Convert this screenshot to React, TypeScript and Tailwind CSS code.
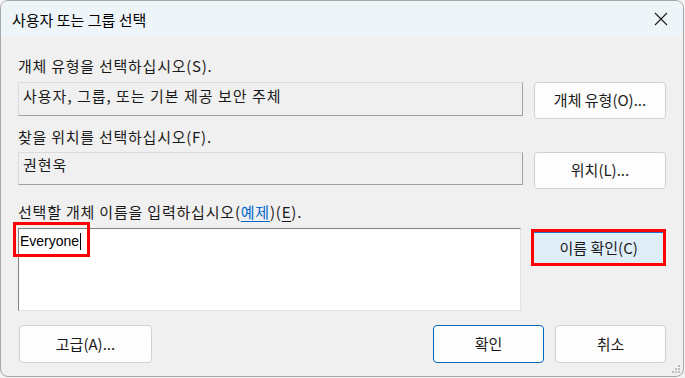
import React from "react";

const font = { fontFamily: '"Noto Sans CJK KR", "Noto Sans", sans-serif' };

function Btn({ children, className = "" }: { children: React.ReactNode; className?: string }) {
  return (
    <div
      className={
        "flex items-center justify-center rounded-[4px] border bg-[#fdfdfd] text-[15px] text-[#1a1a1a] " +
        className
      }
    >
      {children}
    </div>
  );
}

export default function App() {
  return (
    <div className="h-[378px] w-[685px] bg-[#f3f3f3]" style={font}>
      <div className="relative flex h-[377px] w-[684px] flex-col overflow-hidden rounded-[8px] border border-[#a8a8a8] bg-[#f0f0f0]">
        {/* title bar */}
        <div className="flex h-[36px] shrink-0 items-center justify-between bg-[#eef5f9] pl-[11px] pr-[14px]">
          <span className="text-[15px] leading-none text-black">사용자 또는 그룹 선택</span>
          <svg width="14" height="14" viewBox="0 0 14 14" className="mr-[1px]">
            <path d="M1 1 L13 13 M13 1 L1 13" stroke="#1a1a1a" strokeWidth="1.1" />
          </svg>
        </div>

        <div className="flex flex-col px-[17px] text-[15px] text-[#1a1a1a]">
          {/* section 1 */}
          <div className="mt-[19px] h-[20px] leading-[20px] tracking-[0.75px]">개체 유형을 선택하십시오(S).</div>
          <div className="mt-[6px] flex gap-[11px]">
            <div className="h-[34px] w-[505px] border border-[#dcdcdc] border-b-[#a0a0a0] border-r-[#a0a0a0] px-[4px] pt-[3px] leading-[20px] tracking-[1px]">
              사용자, 그룹, 또는 기본 제공 보안 주체
            </div>
            <Btn className="h-[37px] w-[132px] border-[#d0d0d0]">개체 유형(O)...</Btn>
          </div>

          {/* section 2 */}
          <div className="mt-[8px] h-[20px] leading-[20px] tracking-[0.75px]">찾을 위치를 선택하십시오(F).</div>
          <div className="mt-[5px] flex gap-[11px]">
            <div className="h-[33px] w-[505px] border border-[#dcdcdc] border-b-[#a0a0a0] border-r-[#a0a0a0] px-[4px] pt-[2px] leading-[20px] tracking-[1px]">
              권현욱
            </div>
            <Btn className="h-[37px] w-[132px] border-[#d0d0d0]">위치(L)...</Btn>
          </div>

          {/* section 3 */}
          <div className="mt-[13px] h-[20px] leading-[20px] tracking-[0.8px]">
            선택할 개체 이름을 입력하십시오(
            <span className="text-[#0066cc] underline underline-offset-[3px]">예제</span>)(
            <span className="underline underline-offset-[3px]">E</span>).
          </div>
          <div className="mt-[6px] flex gap-[10px]">
            <div className="relative h-[83px] w-[505px] border border-[#828282] border-b-[#e3e3e3] border-r-[#e3e3e3] bg-white">
              <div className="absolute left-[-6px] top-[-7px] h-[35px] w-[77px] border-[3px] border-[#ff0000]" />
              <div
                className="absolute left-[1px] top-[3px] flex items-center text-[14px] leading-[18px] text-black"
                style={{ fontFamily: '"Liberation Sans", Arial, sans-serif' }}
              >
                Everyone
                <span className="ml-[1px] inline-block h-[17px] w-[1px] bg-black" />
              </div>
            </div>
            <div className="mt-[1px] h-[37px] w-[135px] border-[3px] border-[#ff0000] bg-[#3b6fd0] p-0">
              <div className="flex h-full w-full items-center justify-center border-t border-[#1f6fd1] bg-[#e0eef9] text-[15px] text-[#1a1a1a]">
                이름 확인(C)
              </div>
            </div>
          </div>

          {/* bottom buttons */}
          <div className="mt-[14px] flex">
            <Btn className="ml-[1px] h-[38px] w-[133px] border-[#d0d0d0]">고급(A)...</Btn>
            <div className="flex-1" />
            <Btn className="h-[38px] w-[111px] border-[#0067c0]">확인</Btn>
            <Btn className="ml-[11px] h-[38px] w-[111px] border-[#d0d0d0]">취소</Btn>
          </div>
        </div>

        {/* resize grip */}
        <svg width="10" height="10" viewBox="0 0 10 10" className="absolute bottom-[2px] right-[2px]">
          {[
            [7, 1],
            [4, 4],
            [7, 4],
            [1, 7],
            [4, 7],
            [7, 7],
          ].map(([x, y], i) => (
            <rect key={i} x={x} y={y} width="2" height="2" fill="#bdbdbd" />
          ))}
        </svg>
      </div>
    </div>
  );
}
